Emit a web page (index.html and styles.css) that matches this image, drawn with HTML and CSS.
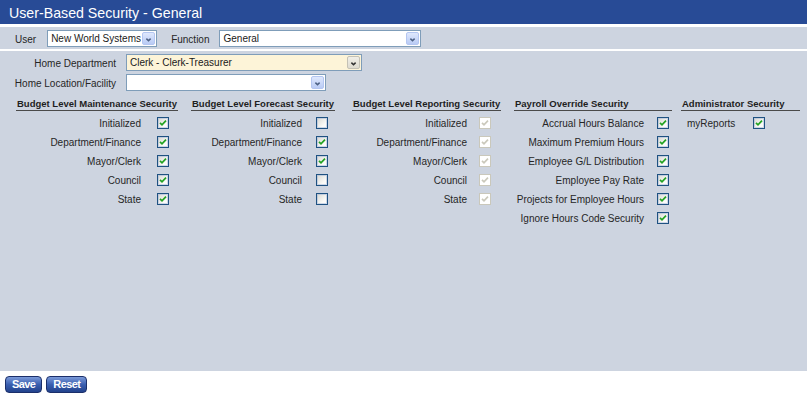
FILE: index.html
```html
<!DOCTYPE html>
<html lang="en">
<head>
  <meta charset="UTF-8">
  <title>User-Based Security - General</title>
  <link rel="stylesheet" href="styles.css">
</head>
<body>
  <div class="page">
    <div class="title">User-Based Security - General</div>

    <div class="toolbar">
      <span class="tb-label">User</span>
      <div class="select select-user">
        <span class="select-text">New World Systems</span>
        <span class="select-arrow"><svg viewBox="0 0 13 13"><path d="M4 5.5 L6.5 8 L9 5.5"/></svg></span>
      </div>
      <span class="tb-label tb-func">Function</span>
      <div class="select select-func">
        <span class="select-text">General</span>
        <span class="select-arrow"><svg viewBox="0 0 13 13"><path d="M4 5.5 L6.5 8 L9 5.5"/></svg></span>
      </div>
    </div>

    <div class="panel">
      <div class="field">
        <span class="field-label">Home Department</span>
        <div class="select select-dept">
          <span class="select-text">Clerk - Clerk-Treasurer</span>
          <span class="select-arrow"><svg viewBox="0 0 13 13"><path d="M4 5.5 L6.5 8 L9 5.5"/></svg></span>
        </div>
      </div>
      <div class="field">
        <span class="field-label">Home Location/Facility</span>
        <div class="select select-loc">
          <span class="select-text"></span>
          <span class="select-arrow"><svg viewBox="0 0 13 13"><path d="M4 5.5 L6.5 8 L9 5.5"/></svg></span>
        </div>
      </div>

      <div class="sections">
        <!-- budget maintenance -->
        <div class="sec sec-maint">
          <div class="sec-head">Budget Level Maintenance Security</div>
          <div class="opt"><span>Initialized</span><span class="cb on"><svg viewBox="0 0 10 10"><path d="M2 4.8 L4 6.8 L8 2.6"/></svg></span></div>
          <div class="opt"><span>Department/Finance</span><span class="cb on"><svg viewBox="0 0 10 10"><path d="M2 4.8 L4 6.8 L8 2.6"/></svg></span></div>
          <div class="opt"><span>Mayor/Clerk</span><span class="cb on"><svg viewBox="0 0 10 10"><path d="M2 4.8 L4 6.8 L8 2.6"/></svg></span></div>
          <div class="opt"><span>Council</span><span class="cb on"><svg viewBox="0 0 10 10"><path d="M2 4.8 L4 6.8 L8 2.6"/></svg></span></div>
          <div class="opt"><span>State</span><span class="cb on"><svg viewBox="0 0 10 10"><path d="M2 4.8 L4 6.8 L8 2.6"/></svg></span></div>
        </div>

        <!-- budget forecast -->
        <div class="sec sec-fcst">
          <div class="sec-head">Budget Level Forecast Security</div>
          <div class="opt"><span>Initialized</span><span class="cb"></span></div>
          <div class="opt"><span>Department/Finance</span><span class="cb on"><svg viewBox="0 0 10 10"><path d="M2 4.8 L4 6.8 L8 2.6"/></svg></span></div>
          <div class="opt"><span>Mayor/Clerk</span><span class="cb on"><svg viewBox="0 0 10 10"><path d="M2 4.8 L4 6.8 L8 2.6"/></svg></span></div>
          <div class="opt"><span>Council</span><span class="cb"></span></div>
          <div class="opt"><span>State</span><span class="cb"></span></div>
        </div>

        <!-- budget reporting (read only) -->
        <div class="sec sec-rept">
          <div class="sec-head">Budget Level Reporting Security</div>
          <div class="opt"><span>Initialized</span><span class="cb off"><svg viewBox="0 0 10 10"><path d="M2 4.8 L4 6.8 L8 2.6"/></svg></span></div>
          <div class="opt"><span>Department/Finance</span><span class="cb off"><svg viewBox="0 0 10 10"><path d="M2 4.8 L4 6.8 L8 2.6"/></svg></span></div>
          <div class="opt"><span>Mayor/Clerk</span><span class="cb off"><svg viewBox="0 0 10 10"><path d="M2 4.8 L4 6.8 L8 2.6"/></svg></span></div>
          <div class="opt"><span>Council</span><span class="cb off"><svg viewBox="0 0 10 10"><path d="M2 4.8 L4 6.8 L8 2.6"/></svg></span></div>
          <div class="opt"><span>State</span><span class="cb off"><svg viewBox="0 0 10 10"><path d="M2 4.8 L4 6.8 L8 2.6"/></svg></span></div>
        </div>

        <!-- payroll -->
        <div class="sec sec-pay">
          <div class="sec-head">Payroll Override Security</div>
          <div class="opt"><span>Accrual Hours Balance</span><span class="cb on"><svg viewBox="0 0 10 10"><path d="M2 4.8 L4 6.8 L8 2.6"/></svg></span></div>
          <div class="opt"><span>Maximum Premium Hours</span><span class="cb on"><svg viewBox="0 0 10 10"><path d="M2 4.8 L4 6.8 L8 2.6"/></svg></span></div>
          <div class="opt"><span>Employee G/L Distribution</span><span class="cb on"><svg viewBox="0 0 10 10"><path d="M2 4.8 L4 6.8 L8 2.6"/></svg></span></div>
          <div class="opt"><span>Employee Pay Rate</span><span class="cb on"><svg viewBox="0 0 10 10"><path d="M2 4.8 L4 6.8 L8 2.6"/></svg></span></div>
          <div class="opt"><span>Projects for Employee Hours</span><span class="cb on"><svg viewBox="0 0 10 10"><path d="M2 4.8 L4 6.8 L8 2.6"/></svg></span></div>
          <div class="opt"><span>Ignore Hours Code Security</span><span class="cb on"><svg viewBox="0 0 10 10"><path d="M2 4.8 L4 6.8 L8 2.6"/></svg></span></div>
        </div>

        <!-- admin -->
        <div class="sec sec-admin">
          <div class="sec-head">Administrator Security</div>
          <div class="opt"><span>myReports</span><span class="cb on"><svg viewBox="0 0 10 10"><path d="M2 4.8 L4 6.8 L8 2.6"/></svg></span></div>
        </div>
      </div>
    </div>

    <div class="actions">
      <button class="btn">Save</button>
      <button class="btn">Reset</button>
    </div>
  </div>
</body>
</html>
```

FILE: styles.css
```css
body {
  margin: 0;
  font-family: 'Liberation Sans', Arial, sans-serif;
  font-size: 10px;
  color: #262626;
  background: #fff;
}

.page {
  width: 807px;
}

.title {
  height: 24px;
  line-height: 26px;
  padding-left: 9px;
  background: #284b96;
  color: #fff;
  font-size: 14.2px;
}

.toolbar {
  margin-top: 3px;
  height: 22px;
  display: flex;
  align-items: center;
  padding-left: 15px;
  background: #cdd4e0;
}

.tb-label {
  margin-right: 11px;
  padding-top: 2px;
}

.tb-func {
  margin-left: 14px;
  margin-right: 10px;
}

/* fake dropdowns */
.select {
  box-sizing: border-box;
  height: 17px;
  display: flex;
  border: 1px solid #7f9db9;
  background: #fff;
}

.select-text {
  flex: 1;
  padding-left: 3px;
  line-height: 15px;
  color: #1a1a1a;
  white-space: nowrap;
  overflow: hidden;
}

.select-arrow {
  width: 13px;
  margin: 1px;
  border-radius: 2px;
  background: linear-gradient(#dfe8fd, #b9cbf5);
  border: 1px solid #b4c6f1;
  box-sizing: border-box;
}

.select-arrow svg {
  display: block;
  width: 11px;
  height: 13px;
}

.select-arrow path {
  fill: none;
  stroke: #4d6185;
  stroke-width: 1.8;
}

.select-user { width: 110px; }
.select-func { width: 202px; }
.select-dept { width: 236px; background: #fdf4d8; }
.select-loc { width: 200px; }

.select-dept .select-arrow {
  background: linear-gradient(#f1efe8, #dedbd0);
  border-color: #c4c1b5;
}

.select-dept .select-arrow path {
  stroke: #333;
}

.panel {
  margin-top: 2px;
  height: 320px;
  box-sizing: border-box;
  padding-top: 3px;
  background: #cdd4e0;
}

.field {
  display: flex;
  align-items: center;
  margin-bottom: 3px;
}

.field-label {
  width: 116px;
  margin-right: 10px;
  text-align: right;
  white-space: nowrap;
  padding-top: 1px;
}

.sections {
  display: flex;
  align-items: flex-start;
  margin-top: 7px;
  padding-left: 16px;
}

.sec-head {
  line-height: 12px;
  padding-left: 1px;
  font-size: 9.5px;
  font-weight: bold;
  color: #1e1e1e;
  border-bottom: 1px solid #4a4a4a;
  margin-bottom: 2px;
  white-space: nowrap;
}

.opt {
  height: 19px;
  display: flex;
  align-items: center;
  justify-content: flex-end;
  gap: var(--gap, 14px);
  padding-right: var(--pad, 8px);
  white-space: nowrap;
}

.opt span:first-child {
  padding-top: 1px;
}

.sec-maint { width: 162px; margin-right: 13px; --gap: 16px; --pad: 9px; }
.sec-fcst { width: 144px; margin-right: 17px; --gap: 14px; --pad: 7px; }
.sec-rept { width: 149px; margin-right: 13px; --gap: 12px; --pad: 10px; }
.sec-pay { width: 158px; margin-right: 9px; --gap: 13px; --pad: 3px; }
.sec-admin { width: 119px; }

.sec-admin .opt {
  justify-content: flex-start;
  padding-left: 6px;
  gap: 18px;
}

/* checkboxes */
.cb {
  box-sizing: border-box;
  width: 12px;
  height: 12px;
  border: 1px solid #1f5282;
  background: linear-gradient(135deg, #d8d8d2, #fbfbf8 70%);
  box-shadow: inset 0 0 0 1px rgba(160, 180, 215, 0.5);
}

.cb svg {
  display: block;
  width: 10px;
  height: 10px;
}

.cb path {
  fill: none;
  stroke: #22a322;
  stroke-width: 1.7;
}

.cb.off {
  border-color: #cac8bb;
  background: #fff;
  box-shadow: none;
}

.cb.off path {
  stroke: #cac8bb;
}

.actions {
  display: flex;
  gap: 4px;
  padding: 5px 0 0 5px;
}

.btn {
  height: 17px;
  padding: 0 6px;
  border: 1px solid #1b2f6a;
  border-radius: 4px;
  background: linear-gradient(#7b9ad9, #3a5fb0 50%, #22428c);
  color: #fff;
  font-family: 'Liberation Sans', Arial, sans-serif;
  font-size: 11px;
  font-weight: bold;
  letter-spacing: -0.6px;
  line-height: 15px;
}
```
